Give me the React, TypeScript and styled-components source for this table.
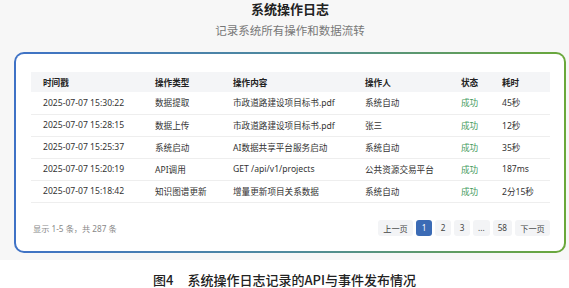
import React from "react";
import styled, { createGlobalStyle } from "styled-components";

const GlobalStyle = createGlobalStyle`
  html, body {
    margin: 0;
    padding: 0;
    background: #ffffff;
    font-family: "Noto Sans", "Noto Sans CJK SC", sans-serif;
  }
`;

type Log = {
  time: string;
  type: string;
  content: string;
  user: string;
  status: string;
  cost: string;
};

const logs: Log[] = [
  { time: "2025-07-07 15:30:22", type: "数据提取", content: "市政道路建设项目标书.pdf", user: "系统自动", status: "成功", cost: "45秒" },
  { time: "2025-07-07 15:28:15", type: "数据上传", content: "市政道路建设项目标书.pdf", user: "张三", status: "成功", cost: "12秒" },
  { time: "2025-07-07 15:25:37", type: "系统启动", content: "AI数据共享平台服务启动", user: "系统自动", status: "成功", cost: "35秒" },
  { time: "2025-07-07 15:20:19", type: "API调用", content: "GET /api/v1/projects", user: "公共资源交易平台", status: "成功", cost: "187ms" },
  { time: "2025-07-07 15:18:42", type: "知识图谱更新", content: "增量更新项目关系数据", user: "系统自动", status: "成功", cost: "2分15秒" },
];

const columns = [
  { label: "时间戳", width: 112 },
  { label: "操作类型", width: 78 },
  { label: "操作内容", width: 132 },
  { label: "操作人", width: 96 },
  { label: "状态", width: 41 },
  { label: "耗时", width: 60 },
];

const pages = [
  { label: "上一页", wide: true },
  { label: "1" },
  { label: "2" },
  { label: "3" },
  { label: "..." },
  { label: "58" },
  { label: "下一页", wide: true },
];

const Page = styled.div`
  background: #f7f7f7;
  padding: 0 3px 7px 14px;
`;

const Header = styled.div`
  text-align: center;
`;

const Title = styled.h1`
  margin: 0;
  font-family: "Noto Sans CJK SC", sans-serif;
  font-size: 13px;
  line-height: 18px;
  font-weight: 700;
  color: #222;
`;

const Subtitle = styled.p`
  margin: 4px 0 0;
  font-family: "Noto Sans CJK SC", sans-serif;
  font-size: 11.5px;
  line-height: 16px;
  color: #777;
`;

const Card = styled.div`
  margin-top: 14px;
  box-sizing: border-box;
  border: 2px solid transparent;
  border-radius: 10px;
  background:
    linear-gradient(#ffffff, #ffffff) padding-box,
    linear-gradient(90deg, #3f72c6 0%, #4f8a9c 50%, #6aa83a 100%) border-box;
  padding: 18px 14px 15px 15px;
`;

const Table = styled.table`
  width: 100%;
  border-collapse: collapse;
  table-layout: fixed;
  font-size: 8.6px;
`;

const HeadCell = styled.th<{ $w: number }>`
  box-sizing: border-box;
  width: ${(p) => p.$w}px;
  background: #f4f5f7;
  height: 20px;
  padding: 0 0 0 12px;
  text-align: left;
  font-family: "Noto Sans CJK SC", sans-serif;
  font-weight: 700;
  color: #222;
`;

const Row = styled.tr`
  border-bottom: 1px solid #eeeeee;
`;

const Cell = styled.td<{ $ok?: boolean }>`
  box-sizing: border-box;
  height: 22px;
  padding: 0 0 0 12px;
  color: ${(p) => (p.$ok ? "#3f9a5c" : "#333")};
  white-space: nowrap;
  overflow: hidden;
`;

const Footer = styled.div`
  margin-top: 17px;
  display: flex;
  justify-content: space-between;
  align-items: center;
`;

const Summary = styled.span`
  padding-left: 2px;
  font-size: 8.2px;
  color: #888;
`;

const Pager = styled.div`
  display: flex;
  gap: 3px;
`;

const PageButton = styled.span<{ $active?: boolean; $wide?: boolean }>`
  display: flex;
  align-items: center;
  justify-content: center;
  height: 16px;
  min-width: ${(p) => (p.$wide ? "35px" : "16px")};
  padding: 0 ${(p) => (p.$wide ? "0" : "5px")};
  box-sizing: border-box;
  border-radius: 3px;
  font-size: 8.2px;
  background: ${(p) => (p.$active ? "#3b6bb5" : "#f3f4f6")};
  color: ${(p) => (p.$active ? "#ffffff" : "#444")};
`;

const Caption = styled.div`
  margin-top: 11px;
  text-align: center;
  font-family: "Noto Sans CJK SC", sans-serif;
  font-size: 13px;
  font-weight: 500;
  line-height: 18px;
  color: #222;
`;

const FigureNo = styled.span`
  margin-right: 14px;
`;

export default function App() {
  return (
    <>
      <GlobalStyle />
      <Page>
        <Header>
          <Title>系统操作日志</Title>
          <Subtitle>记录系统所有操作和数据流转</Subtitle>
        </Header>
        <Card>
          <Table>
            <thead>
              <tr>
                {columns.map((c) => (
                  <HeadCell key={c.label} $w={c.width}>
                    {c.label}
                  </HeadCell>
                ))}
              </tr>
            </thead>
            <tbody>
              {logs.map((l) => (
                <Row key={l.time}>
                  <Cell>{l.time}</Cell>
                  <Cell>{l.type}</Cell>
                  <Cell>{l.content}</Cell>
                  <Cell>{l.user}</Cell>
                  <Cell $ok>{l.status}</Cell>
                  <Cell>{l.cost}</Cell>
                </Row>
              ))}
            </tbody>
          </Table>
          <Footer>
            <Summary>显示 1-5 条，共 287 条</Summary>
            <Pager>
              {pages.map((p) => (
                <PageButton key={p.label} $active={p.label === "1"} $wide={p.wide}>
                  {p.label}
                </PageButton>
              ))}
            </Pager>
          </Footer>
        </Card>
      </Page>
      <Caption>
        <FigureNo>图4</FigureNo>系统操作日志记录的API与事件发布情况
      </Caption>
    </>
  );
}
